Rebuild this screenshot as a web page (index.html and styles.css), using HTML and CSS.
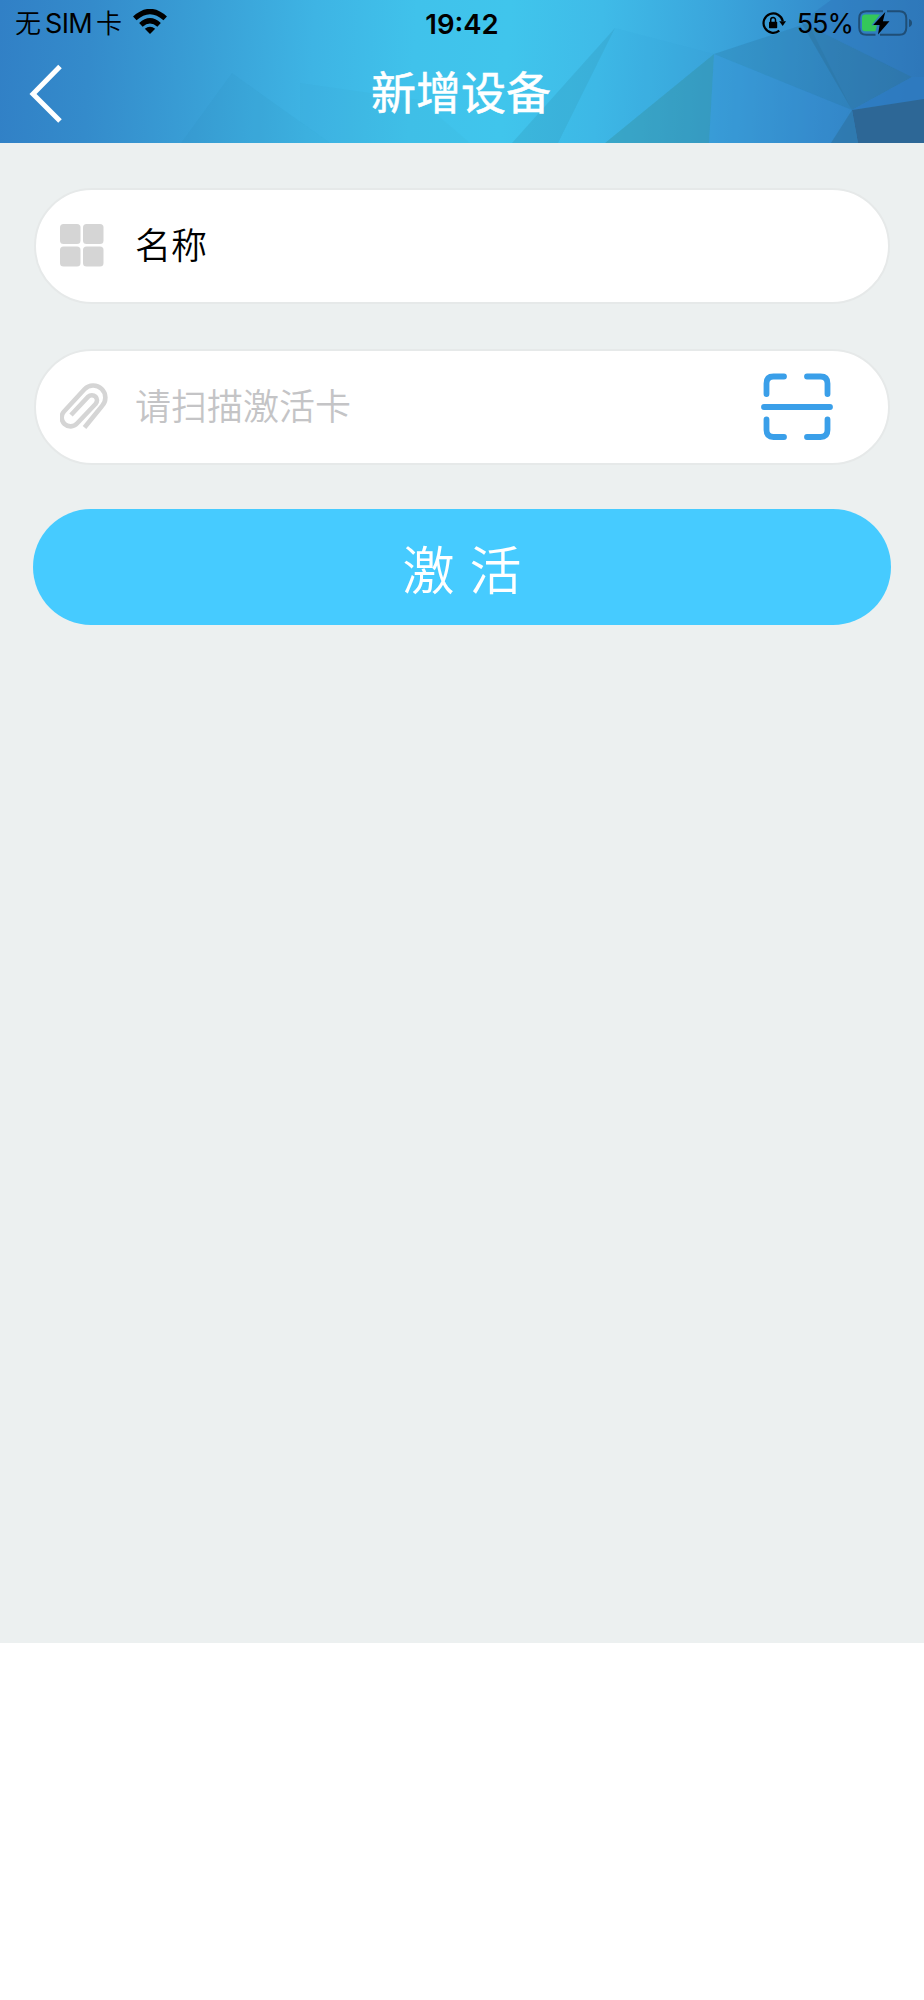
FILE: index.html
```html
<!DOCTYPE html>
<html lang="zh-CN">
<head>
<meta charset="utf-8">
<title>新增设备</title>
<link rel="stylesheet" href="styles.css">
</head>
<body>
<div class="screen">
  <header class="header">
    <svg class="header-art" viewBox="0 0 924 143" preserveAspectRatio="none" aria-hidden="true">
      <defs>
        <linearGradient id="sky" x1="0" y1="0" x2="924" y2="60" gradientUnits="userSpaceOnUse">
          <stop offset="0" stop-color="#3180c6"/>
          <stop offset=".1" stop-color="#348bcb"/>
          <stop offset=".22" stop-color="#399fd6"/>
          <stop offset=".34" stop-color="#3eb4e4"/>
          <stop offset=".45" stop-color="#40c2eb"/>
          <stop offset=".55" stop-color="#40c5ec"/>
          <stop offset=".65" stop-color="#3fbbe8"/>
          <stop offset=".78" stop-color="#3aa4db"/>
          <stop offset=".9" stop-color="#348bcb"/>
          <stop offset="1" stop-color="#307bba"/>
        </linearGradient>
      </defs>
      <rect width="924" height="143" fill="url(#sky)"/>
      <path d="M181 143L232 73L330 143Z" fill="#2878a0" opacity=".06"/>
      <path d="M300 83L420 100L470 143H330L300 122Z" fill="#2878a0" opacity=".04"/>
      <path d="M512 143L615 28L558 143Z" fill="#28809e" opacity=".2"/>
      <path d="M558 143L615 28L714 54L605 143Z" fill="#2c8fc8" opacity=".05"/>
      <path d="M605 143L714 54L709 143Z" fill="#2e8993" opacity=".36"/>
      <path d="M714 54L850 109L831 143H709Z" fill="#3489cd" opacity=".3"/>
      <path d="M714 54L808 23L852 110Z" fill="#28749e" opacity=".28"/>
      <path d="M801 22L912 77L852 110Z" fill="#2b6d95" opacity=".42"/>
      <path d="M801 22L831 0H924V77H912Z" fill="#2c72b8" opacity=".4"/>
      <path d="M852 110L912 77H924V99Z" fill="#2d79c0" opacity=".75"/>
      <path d="M852 110L924 99V143H858Z" fill="#2d6796"/>
      <path d="M831 143L852 110L858 143Z" fill="#2e75a7" opacity=".7"/>
    </svg>
    <div class="status">
      <div class="status-left">
        <span class="carrier"><span>无</span><span class="sim">SIM</span><span>卡</span></span>
        <svg class="wifi" viewBox="0 0 34 26" aria-hidden="true">
          <path d="M1.800 9.400Q17-4.400 32.200 9.400M7.900 15.900Q17 7.700 26.100 15.900" fill="none" stroke="#000" stroke-width="5.200"/>
          <path d="M11.800 19.700Q17 15.600 22.200 19.700L17 25Z"/>
        </svg>
      </div>
      <div class="time">19:42</div>
      <div class="status-right">
        <svg class="lock" viewBox="0 0 24 22" aria-hidden="true">
          <path d="M17.300 18.700A9.700 9.700 0 1 1 20.800 9.300" fill="none" stroke="#000" stroke-width="2.200"/>
          <path d="M17.200 9.300H24L20.700 14Z"/>
          <rect x="7" y="9.800" width="8.200" height="6.400" rx=".8"/>
          <path d="M8.700 10V8a2.400 2.400 0 0 1 4.800 0v2" fill="none" stroke="#000" stroke-width="1.500"/>
        </svg>
        <span class="percent">55%</span>
        <svg class="battery" viewBox="0 0 54 26" aria-hidden="true">
          <path d="M25 1.200H8.500Q1.200 1.200 1.200 8.500V17.500Q1.200 24.800 8.500 24.800H17.500M29 1.200H41.500Q48.300 1.200 48.300 8.500V17.500Q48.300 24.800 41.500 24.800H22" fill="none" stroke="#1f4e76" stroke-width="2"/>
          <path d="M51 9Q54 10 54 13T51 17Z" fill="#1f4e76"/>
          <path d="M7 4.500H22L13.500 15.200H19L17.500 21.300H7Q4 21.300 4 18.300V7.500Q4 4.500 7 4.500Z" fill="#34c759"/>
          <path d="M27.300 2L15.200 15H21.600L20 24.600L31.500 11.300H24.900Z"/>
        </svg>
      </div>
    </div>
    <div class="nav">
      <svg class="back" viewBox="0 0 34 60" aria-hidden="true">
        <path d="M31 2.500L4 30L31 57" fill="none" stroke="#fff" stroke-width="5"/>
      </svg>
      <h1 class="title">新增设备</h1>
    </div>
  </header>
  <main class="form">
    <div class="field">
      <svg class="field-icon" viewBox="0 0 48 48" fill="#d5d5d5" aria-hidden="true">
        <rect x="0" y="2" width="20.500" height="20" rx="3.500"/><rect x="23" y="2" width="20.500" height="20" rx="3.500"/>
        <rect x="0" y="24.500" width="20.500" height="20" rx="3.500"/><rect x="23" y="24.500" width="20.500" height="20" rx="3.500"/>
      </svg>
      <span class="value">名称</span>
    </div>
    <div class="field">
      <svg class="field-icon" viewBox="0 0 48 48" aria-hidden="true">
        <path d="M11 32L28.200 13.700A4.400 4.400 0 0 1 35.500 21L17 40.500A8.500 8.500 0 0 1 4 28.500L24.500 6.300A12 12 0 0 1 42 23L24.500 44.500" fill="none" stroke="#d5d5d5" stroke-width="4.600"/>
      </svg>
      <span class="placeholder">请扫描激活卡</span>
      <svg class="scan" viewBox="0 0 72 68" fill="none" stroke="#3a9fe9" stroke-width="5.800" stroke-linecap="round" aria-hidden="true">
        <path d="M5.500 21V10.500Q5.500 3.500 12.500 3.500H23M46 3.500H59.500Q66.500 3.500 66.500 10.500V21M66.500 46.500V57Q66.500 64 59.500 64H46M23 64H12.500Q5.500 64 5.500 57V46.500M3 34H69"/>
      </svg>
    </div>
    <button class="submit" type="button"><span>激</span><span>活</span></button>
  </main>
</div>
</body>
</html>
```
FILE: styles.css
```css
* { box-sizing: border-box; }
body {
  margin: 0;
  background: #fff;
  font-family: "Inter", "Noto Sans CJK SC", sans-serif;
}
.screen { width: 924px; min-height: 1643px; background: #ecf0f0; }
.header { position: relative; height: 143px; display: flex; flex-direction: column; overflow: hidden; }
.header-art { position: absolute; inset: 0; width: 100%; height: 100%; }
.status {
  position: relative;
  height: 46px;
  padding: 0 12px 0 15px;
  display: grid;
  grid-template-columns: 1fr auto 1fr;
  align-items: center;
  color: #000;
  font-size: 26px;
  line-height: 44px;
}
.status-left, .status-right { display: flex; align-items: center; }
.status-right { justify-content: flex-end; }
.carrier { display: flex; gap: 4px; padding-top: 2px; font-weight: 350; }
.sim { font-size: 27px; font-weight: 400; letter-spacing: -0.7px; }
.wifi { width: 34px; height: 26px; margin: 0 0 2px 11px; }
.time { padding: 1px 3px 0 0; font-size: 27.5px; font-weight: 600; }
.lock { width: 24px; height: 22px; margin-right: 11px; }
.percent { margin-right: 5px; padding-top: 2px; font-size: 27px; letter-spacing: -1px; }
.battery { width: 54px; height: 26px; margin-bottom: 1px; }
.nav { position: relative; height: 97px; padding-bottom: 2px; display: grid; grid-template-columns: 1fr auto 1fr; align-items: center; }
.back { width: 34px; height: 60px; margin-left: 29px; }
.title { grid-column: 2; margin: 0; padding-right: 2px; color: #fff; font-size: 45px; font-weight: 400; line-height: 90px; -webkit-text-stroke: 0.5px #fff; }
.form { padding: 45px 33px 0; display: flex; flex-direction: column; gap: 44.5px; }
.field {
  height: 116px;
  margin: 0 1px;
  padding: 0 55px 0 24px;
  display: flex;
  align-items: center;
  border: 2px solid #e6e9e9;
  border-radius: 58px;
  background: #fff;
  font-size: 36px;
  line-height: 52px;
}
.field-icon { width: 48px; height: 48px; margin-right: 27px; }
.value { color: #000; font-weight: 350; }
.placeholder { flex: 1; color: #c4c4c6; font-weight: 350; }
.scan { width: 72px; height: 68px; }
.submit {
  height: 116px;
  padding: 0;
  display: flex;
  align-items: center;
  justify-content: center;
  gap: 15px;
  border: 0;
  border-radius: 58px;
  background: #46cbff;
  color: #fff;
  font: 350 52px "Noto Sans CJK SC", sans-serif;
}
```
